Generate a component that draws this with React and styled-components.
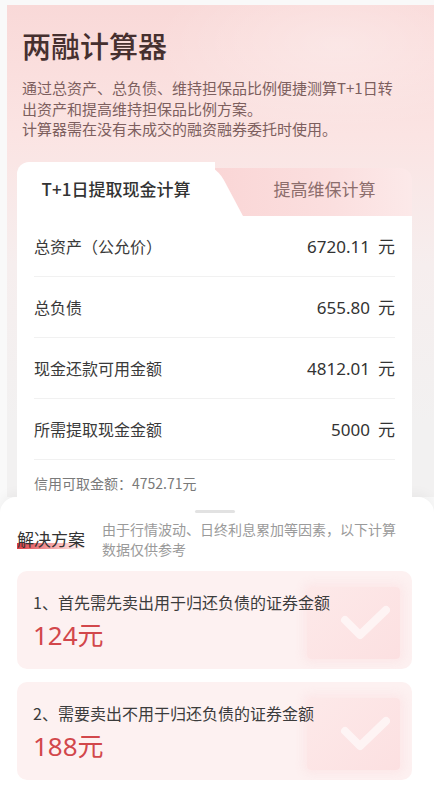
import React from 'react';
import styled, { createGlobalStyle } from 'styled-components';

const GlobalStyle = createGlobalStyle`
  html, body {
    margin: 0;
    padding: 0;
    background: #fafafa;
  }
  body {
    font-family: "Noto Sans CJK SC", "Noto Sans", sans-serif;
    color: #333;
  }
  * { box-sizing: border-box; }
`;

const Page = styled.div`
  display: flex;
  flex-direction: column;
  width: 434px;
  height: 796px;
  overflow: hidden;
  padding-top: 5px;
  background: #f9f9f9;
`;

const Header = styled.div`
  flex: none;
  margin-left: 7px;
  padding: 22px 15px 0 10px;
  background:
    radial-gradient(ellipse 260px 120px at 330px 40px, rgba(255, 255, 255, 0.3), rgba(255, 255, 255, 0) 70%),
    linear-gradient(180deg, #f9d9d8 0px, #fbe4e3 130px, #f6eeee 260px, #f2f1f1 420px);
`;

const Title = styled.h1`
  margin: 0 0 0 5px;
  font-size: 29px;
  line-height: 36px;
  font-weight: 500;
  color: #46302f;
`;

const Desc = styled.p`
  margin: 15px 0 0 5px;
  width: 380px;
  font-size: 15px;
  line-height: 20.5px;
  color: #7d5f5e;
`;

const Card = styled.div`
  margin: 22px 0 0;
  width: 395px;
`;

const Tabs = styled.div`
  display: flex;
  height: 54px;
`;

const ActiveTab = styled.div`
  position: relative;
  flex: 0 0 198px;
  display: flex;
  align-items: center;
  justify-content: center;
  font-size: 17px;
  font-weight: 500;
  color: #333;
  background: #fff;
  border-top-left-radius: 12px;
  z-index: 1;

  &::after {
    content: '';
    position: absolute;
    top: 0;
    right: -28px;
    width: 52px;
    height: 100%;
    background: #fff;
    border-top-right-radius: 18px;
    transform: skewX(28deg);
    transform-origin: bottom left;
  }
`;

const Tab = styled.div`
  flex: 1;
  display: flex;
  align-items: center;
  justify-content: center;
  margin-top: 6px;
  padding: 0 0 6px 22px;
  font-size: 17px;
  color: #8c6d6c;
  background: linear-gradient(90deg, #fad6d6 0%, #fbdfdf 60%, #fce9e9 100%);
  border-top-right-radius: 12px;
`;

const TabText = styled.span`
  position: relative;
  z-index: 2;
`;

const Rows = styled.div`
  position: relative;
  z-index: 2;
  padding: 0 17px;
  background: #fff;
`;

const Row = styled.div`
  display: flex;
  align-items: center;
  justify-content: space-between;
  height: 61px;
  border-bottom: 1px solid #f1f1f1;
`;

const Label = styled.span`
  font-size: 16px;
  color: #3a3a3a;
`;

const Value = styled.span`
  font-size: 17px;
  color: #333;
  font-family: "Noto Sans", "Noto Sans CJK SC", sans-serif;

  em {
    font-style: normal;
    margin-left: 8px;
    font-family: "Noto Sans CJK SC", sans-serif;
  }
`;

const Credit = styled.div`
  padding: 13px 0 4px;
  font-size: 14px;
  line-height: 20px;
  color: #7a7a7a;
`;

const Sheet = styled.div`
  flex: 1;
  position: relative;
  padding: 13px 22px 0 17px;
  background: #fff;
  border-radius: 16px 16px 0 0;
  box-shadow: 0 -4px 12px rgba(0, 0, 0, 0.04);
`;

const Handle = styled.div`
  width: 40px;
  height: 3px;
  margin: 0 auto;
  border-radius: 2px;
  background: #e2e2e2;
`;

const SolutionHead = styled.div`
  display: flex;
  align-items: flex-start;
  gap: 17px;
  margin-top: 6px;
  padding-right: 12px;
`;

const SolutionTitle = styled.span`
  flex: none;
  margin-top: 9px;
  font-size: 17px;
  line-height: 22px;
  color: #333;
  background: linear-gradient(90deg, rgba(214, 40, 48, 0.9), rgba(240, 90, 90, 0.45) 60%, rgba(255, 150, 150, 0)) no-repeat;
  background-size: 100% 6px;
  background-position: 0 95%;
`;

const Note = styled.span`
  font-size: 14px;
  line-height: 20px;
  color: #9a9a9a;
`;

const Plans = styled.div`
  display: flex;
  flex-direction: column;
  gap: 13px;
  margin-top: 12px;
`;

const Plan = styled.div`
  position: relative;
  height: 98px;
  padding: 19px 16px 0;
  border-radius: 10px;
  background: #fdf1f1;
  overflow: hidden;
`;

const PlanLabel = styled.div`
  position: relative;
  z-index: 1;
  font-size: 16px;
  line-height: 24px;
  color: #3c3c3c;
`;

const PlanAmount = styled.div`
  position: relative;
  z-index: 1;
  margin-top: 4px;
  font-size: 26px;
  line-height: 34px;
  color: #d2474b;
  font-family: "Noto Sans", "Noto Sans CJK SC", sans-serif;
`;

const Badge = styled.div`
  position: absolute;
  top: 16px;
  right: 12px;
  width: 93px;
  height: 72px;
  border-radius: 4px;
  background: linear-gradient(135deg, #fde9e9 0%, #fce0e1 100%);
  box-shadow: 0 0 8px 4px rgba(252, 225, 226, 0.6);
  display: flex;
  align-items: center;
  justify-content: flex-end;
  padding-right: 10px;
`;

const Check = () => (
  <svg width="50" height="36" viewBox="0 0 50 36" fill="none">
    <path d="M5 15 L20 30 L46 5" stroke="#fff" strokeOpacity="0.6" strokeWidth="8" strokeLinecap="round" strokeLinejoin="round" />
  </svg>
);

const rows = [
  { label: '总资产（公允价）', value: '6720.11' },
  { label: '总负债', value: '655.80' },
  { label: '现金还款可用金额', value: '4812.01' },
  { label: '所需提取现金金额', value: '5000' },
];

const plans = [
  { label: '1、首先需先卖出用于归还负债的证券金额', amount: '124元' },
  { label: '2、需要卖出不用于归还负债的证券金额', amount: '188元' },
];

export default function App() {
  return (
    <>
      <GlobalStyle />
      <Page>
        <Header>
          <Title>两融计算器</Title>
          <Desc>
            通过总资产、总负债、维持担保品比例便捷测算T+1日转出资产和提高维持担保品比例方案。
            <br />
            计算器需在没有未成交的融资融券委托时使用。
          </Desc>
          <Card>
            <Tabs>
              <ActiveTab>
                <TabText>T+1日提取现金计算</TabText>
              </ActiveTab>
              <Tab>提高维保计算</Tab>
            </Tabs>
            <Rows>
              {rows.map((r) => (
                <Row key={r.label}>
                  <Label>{r.label}</Label>
                  <Value>
                    {r.value}
                    <em>元</em>
                  </Value>
                </Row>
              ))}
              <Credit>信用可取金额：4752.71元</Credit>
            </Rows>
          </Card>
        </Header>
        <Sheet>
          <Handle />
          <SolutionHead>
            <SolutionTitle>解决方案</SolutionTitle>
            <Note>由于行情波动、日终利息累加等因素，以下计算数据仅供参考</Note>
          </SolutionHead>
          <Plans>
            {plans.map((p) => (
              <Plan key={p.label}>
                <Badge>
                  <Check />
                </Badge>
                <PlanLabel>{p.label}</PlanLabel>
                <PlanAmount>{p.amount}</PlanAmount>
              </Plan>
            ))}
          </Plans>
        </Sheet>
      </Page>
    </>
  );
}
